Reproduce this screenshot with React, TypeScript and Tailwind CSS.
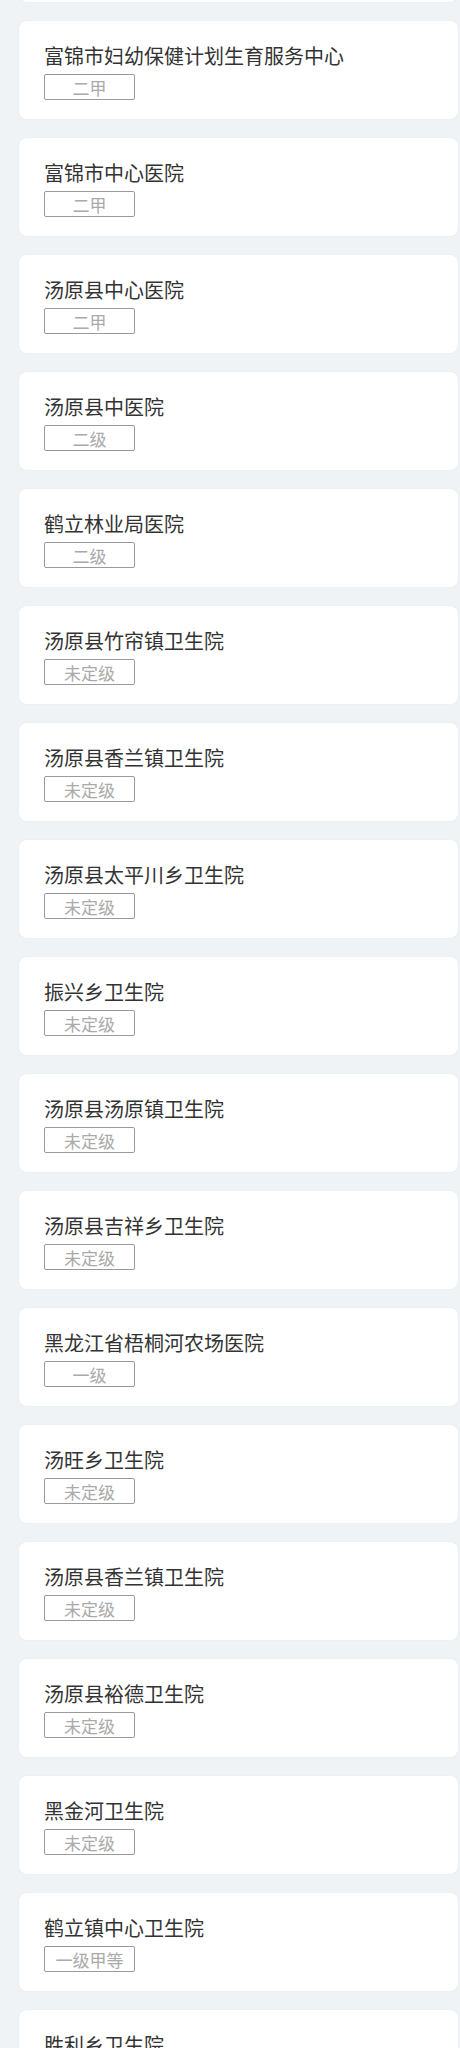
const hospitals: { name: string; level: string }[] = [
  { name: "富锦市妇幼保健计划生育服务中心", level: "二甲" },
  { name: "富锦市中心医院", level: "二甲" },
  { name: "汤原县中心医院", level: "二甲" },
  { name: "汤原县中医院", level: "二级" },
  { name: "鹤立林业局医院", level: "二级" },
  { name: "汤原县竹帘镇卫生院", level: "未定级" },
  { name: "汤原县香兰镇卫生院", level: "未定级" },
  { name: "汤原县太平川乡卫生院", level: "未定级" },
  { name: "振兴乡卫生院", level: "未定级" },
  { name: "汤原县汤原镇卫生院", level: "未定级" },
  { name: "汤原县吉祥乡卫生院", level: "未定级" },
  { name: "黑龙江省梧桐河农场医院", level: "一级" },
  { name: "汤旺乡卫生院", level: "未定级" },
  { name: "汤原县香兰镇卫生院", level: "未定级" },
  { name: "汤原县裕德卫生院", level: "未定级" },
  { name: "黑金河卫生院", level: "未定级" },
  { name: "鹤立镇中心卫生院", level: "一级甲等" },
  { name: "胜利乡卫生院", level: "未定级" },
];

function HospitalCard({ name, level }: { name: string; level: string }) {
  return (
    <div className="ml-[19px] mr-[2px] mb-[19px] h-[98px] rounded-[8px] bg-white pt-[22px] pl-[25px] shadow-[0_0_2px_rgba(0,0,0,0.06)]">
      <div className="h-[26px] text-[20px] leading-[26px] text-[#333]">{name}</div>
      <div className="mt-[5px] flex h-[26px] w-[91px] items-center justify-center rounded-[2px] border border-[#9a9a9a] text-[17px] leading-none text-[#aaa]">
        {level}
      </div>
    </div>
  );
}

export default function App() {
  return (
    <div
      className="h-[2048px] overflow-hidden bg-[#eff3f6]"
      style={{ fontFamily: '"Noto Sans CJK SC", "Noto Sans", sans-serif' }}
    >
      {/* previous card, scrolled mostly out of view */}
      <div className="-mt-[96px]">
        <HospitalCard name="" level="" />
      </div>
      {hospitals.map((h, i) => (
        <HospitalCard key={i} name={h.name} level={h.level} />
      ))}
    </div>
  );
}
